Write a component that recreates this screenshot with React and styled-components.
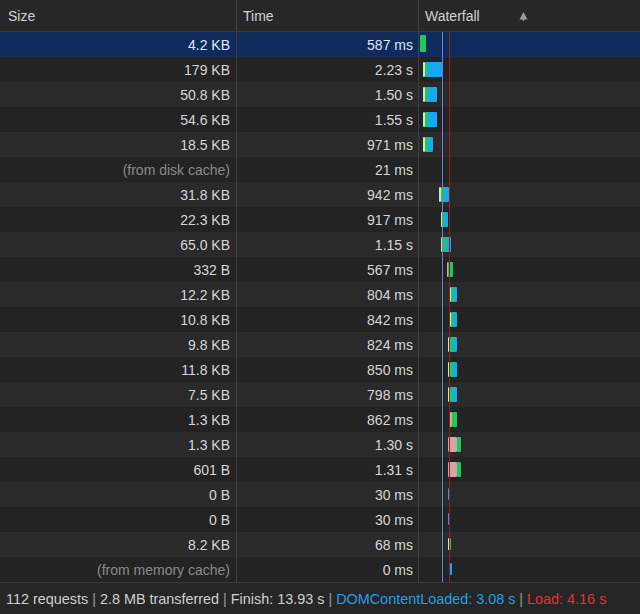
import React from "react";
import styled, { createGlobalStyle, css } from "styled-components";

const Global = createGlobalStyle`
  html, body { margin: 0; padding: 0; background: #242424; }
  body { font-family: "Liberation Sans", Arial, sans-serif; }
  #root { width: 640px; height: 614px; overflow: hidden; }
`;

const Panel = styled.div`
  width: 640px;
  height: 614px;
  display: flex;
  flex-direction: column;
  background: #242424;
  color: #d4d4d4;
  font-size: 14px;
`;

const Grid = styled.div`
  display: grid;
  grid-template-columns: 236px 182px 222px;
`;

const HeaderRow = styled(Grid)`
  height: 31px;
  background: #272727;
  border-bottom: 1px solid #3a3a3a;
`;

const HeadCell = styled.div`
  display: flex;
  align-items: center;
  padding-left: ${(p) => (p.$first ? 8 : 6)}px;
  color: #d2d2d2;
  font-size: 14px;
  ${(p) => !p.$first && css`border-left: 1px solid #3f3f3f;`}
  gap: 39px;
`;

const Body = styled.div`
  position: relative;
  flex: 1;
  display: flex;
  flex-direction: column;
`;

const Row = styled(Grid)`
  height: 25px;
  background: ${(p) => (p.$selected ? "#0e2b5c" : p.$odd ? "#2a2a2a" : "#232323")};
  color: ${(p) => (p.$selected ? "#dfe6f2" : "#d6d6d6")};
`;

const Cell = styled.div`
  display: flex;
  align-items: center;
  justify-content: flex-end;
  padding-right: ${(p) => p.$pr}px;
  color: ${(p) => (p.$muted ? "#8a8a8a" : "inherit")};
  ${(p) => p.$divider && css`border-left: 1px solid #3f3f3f;`}
`;

const WaterCell = styled.div`
  position: relative;
  border-left: 1px solid #3f3f3f;
`;

const Seg = styled.div`
  position: absolute;
  border-radius: 1px;
`;

const VLine = styled.div`
  position: absolute;
  top: 0;
  bottom: 0;
  width: 1px;
  pointer-events: none;
`;

const Footer = styled.div`
  height: 31px;
  border-top: 1px solid #3a3a3a;
  background: #262626;
  display: flex;
  align-items: center;
  padding-left: 6px;
  font-size: 14.4px;
  color: #cfcfcf;
`;

const Summary = styled.span`
  white-space: pre;
`;

const Sep = styled.span`
  color: #9a9a9a;
`;

const Blue = styled.span`
  color: #229fe6;
`;
const Red = styled.span`
  color: #e5322d;
`;

const G = "#1fc85a";
const B = "#14a9f6";
const GB = `linear-gradient(90deg, ${G} 0%, ${G} 20%, ${B} 70%)`;
const LIGHT = "#cfe3cf";
const PINK = "#d9a3a3";

// positions relative to waterfall column left edge (x=418)
const rows = [
  { size: "4.2 KB", time: "587 ms", segs: [[2, 6, G, 3, 17]] },
  { size: "179 KB", time: "2.23 s", segs: [[5, 2, LIGHT], [7, 17, `linear-gradient(90deg, ${G} 0, ${G} 2px, ${B} 3px)`]] },
  { size: "50.8 KB", time: "1.50 s", segs: [[5, 2, LIGHT], [7, 12, `linear-gradient(90deg, ${G} 0, ${G} 2px, ${B} 4px)`]] },
  { size: "54.6 KB", time: "1.55 s", segs: [[5, 2, LIGHT], [7, 12, `linear-gradient(90deg, ${G} 0, ${G} 2px, ${B} 4px)`]] },
  { size: "18.5 KB", time: "971 ms", segs: [[5, 2, LIGHT], [7, 8, `linear-gradient(90deg, ${G} 0, ${G} 2px, ${B} 5px)`]] },
  { size: "(from disk cache)", muted: true, time: "21 ms", segs: [] },
  { size: "31.8 KB", time: "942 ms", segs: [[21, 2, LIGHT], [23, 8, GB]] },
  { size: "22.3 KB", time: "917 ms", segs: [[23, 1, LIGHT], [24, 6, GB]] },
  { size: "65.0 KB", time: "1.15 s", segs: [[23, 2, LIGHT], [25, 8, GB]] },
  { size: "332 B", time: "567 ms", segs: [[29, 1, PINK], [30, 5, G]] },
  { size: "12.2 KB", time: "804 ms", segs: [[31, 2, LIGHT], [33, 6, GB]] },
  { size: "10.8 KB", time: "842 ms", segs: [[31, 2, LIGHT], [33, 6, GB]] },
  { size: "9.8 KB", time: "824 ms", segs: [[30, 2, LIGHT], [32, 7, GB]] },
  { size: "11.8 KB", time: "850 ms", segs: [[30, 2, LIGHT], [32, 7, GB]] },
  { size: "7.5 KB", time: "798 ms", segs: [[30, 2, LIGHT], [32, 7, GB]] },
  { size: "1.3 KB", time: "862 ms", segs: [[31, 3, PINK], [34, 5, G]] },
  { size: "1.3 KB", time: "1.30 s", segs: [[30, 9, PINK], [39, 4, G]] },
  { size: "601 B", time: "1.31 s", segs: [[30, 9, PINK], [39, 4, G]] },
  { size: "0 B", time: "30 ms", segs: [[30, 2, "#3d8fd6", 6, 12]] },
  { size: "0 B", time: "30 ms", segs: [[30, 2, "#3d8fd6", 6, 12]] },
  { size: "8.2 KB", time: "68 ms", segs: [[30, 1, LIGHT, 6, 12], [31, 2, G, 6, 12]] },
  { size: "(from memory cache)", muted: true, time: "0 ms", segs: [[32, 2, B, 6, 12]] },
];

function SortIcon() {
  return (
    <svg width="9" height="10" viewBox="0 0 9 10">
      <path d="M4.5 1 L8.5 8.5 L5.5 8.5 L5 10 L4 10 L3.5 8.5 L0.5 8.5 Z" fill="#9c9c9c" />
    </svg>
  );
}

export default function App() {
  return (
    <>
      <Global />
      <Panel>
        <HeaderRow>
          <HeadCell $first>Size</HeadCell>
          <HeadCell>Time</HeadCell>
          <HeadCell>
            <span>Waterfall</span>
            <SortIcon />
          </HeadCell>
        </HeaderRow>
        <Body>
          {rows.map((r, i) => (
            <Row key={i} $selected={i === 0} $odd={i % 2 === 0}>
              <Cell $pr={6} $muted={r.muted}>{r.size}</Cell>
              <Cell $pr={5} $divider>{r.time}</Cell>
              <WaterCell>
                {r.segs.map(([l, w, bg, t = 5, h = 15], j) => (
                  <Seg
                    key={j}
                    style={{ left: l - 1, width: w, top: t, height: h, background: bg }}
                  />
                ))}
              </WaterCell>
            </Row>
          ))}
          <VLine style={{ left: 442, background: "#6f7fd9" }} />
          <VLine style={{ left: 449, background: "#8e2323" }} />
        </Body>
        <Footer>
          <Summary>
            {"112 requests "}
            <Sep>|</Sep>
            {" 2.8 MB transferred "}
            <Sep>|</Sep>
            {" Finish: 13.93 s "}
            <Sep>|</Sep>
            {" "}
            <Blue>DOMContentLoaded: 3.08 s</Blue>
            {" "}
            <Sep>|</Sep>
            {" "}
            <Red>Load: 4.16 s</Red>
          </Summary>
        </Footer>
      </Panel>
    </>
  );
}
